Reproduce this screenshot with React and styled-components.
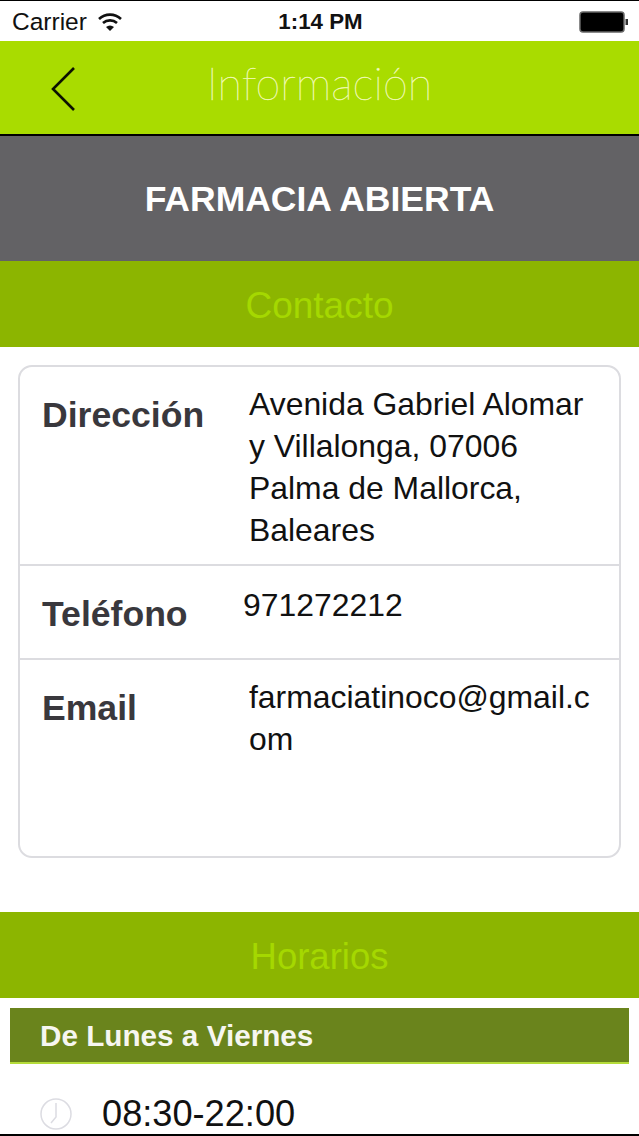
import React from 'react';
import styled, { createGlobalStyle } from 'styled-components';

const GlobalStyle = createGlobalStyle`
  html, body {
    margin: 0;
    padding: 0;
    background: #fff;
    overflow: hidden;
  }
  * { box-sizing: border-box; }
`;

const Page = styled.div`
  width: 639px;
  height: 1136px;
  overflow: hidden;
  font-family: "Liberation Sans", Arial, sans-serif;
  background: #fff;
  border-top: 1px solid #000;
  border-bottom: 2px solid #000;
  display: flex;
  flex-direction: column;
`;

const StatusBar = styled.div`
  height: 40px;
  flex: none;
  display: grid;
  grid-template-columns: 1fr auto 1fr;
  align-items: center;
  padding: 1px 10px 0 12px;
  color: #111;
`;

const StatusLeft = styled.div`
  display: flex;
  align-items: center;
  gap: 11px;
  font-size: 24.5px;
`;

const Clock = styled.div`
  font-size: 22.3px;
  font-weight: 700;
`;

const BatteryWrap = styled.div`
  justify-self: end;
  display: flex;
  align-items: center;
`;

const NavBar = styled.div`
  height: 93px;
  flex: none;
  background: #a9dc00;
  display: flex;
  align-items: center;
  justify-content: center;
  position: relative;
`;

const BackIcon = styled.svg`
  position: absolute;
  left: 50px;
  top: 25px;
`;

const NavTitle = styled.div`
  font-family: Lato, sans-serif;
  font-weight: 100;
  font-size: 45px;
  color: #f4fbc8;
  -webkit-text-stroke: 0.4px #eef9b0;
  margin-top: -9px;
`;

const Banner = styled.div`
  height: 127px;
  flex: none;
  background: #636265;
  border-top: 2px solid #000;
  padding-top: 2px;
  color: #fff;
  font-size: 35.5px;
  font-weight: 700;
  display: flex;
  align-items: center;
  justify-content: center;
`;

const SectionBar = styled.div`
  height: 86px;
  flex: none;
  background: #8cb500;
  padding-top: 4px;
  color: #a5d800;
  font-size: ${(p) => p.$size}px;
  display: flex;
  align-items: center;
  justify-content: center;
`;

const Card = styled.div`
  margin: 18px 18px 54px 18px;
  width: 603px;
  height: 493px;
  flex: none;
  border: 2px solid #dcdce0;
  border-radius: 14px;
  display: flex;
  flex-direction: column;
`;

const Row = styled.div`
  height: ${(p) => p.$height}px;
  flex: none;
  display: grid;
  grid-template-columns: ${(p) => p.$labelWidth}px 1fr;
  padding: ${(p) => p.$top}px 20px 0 22px;
  border-bottom: ${(p) => (p.$last ? 'none' : '2px solid #dcdce0')};
`;

const Label = styled.div`
  color: #39383d;
  font-size: 35.6px;
  font-weight: 700;
  line-height: 42px;
  padding-top: ${(p) => p.$offset}px;
`;

const Value = styled.div`
  color: #111;
  font-size: 31.9px;
  line-height: 42px;
  word-break: break-all;
`;

const AddressLine = styled.div`
  white-space: nowrap;
`;

const DayBar = styled.div`
  margin: 10px 10px 0;
  height: 56px;
  flex: none;
  background: #6a841c;
  border-bottom: 2px solid #b5dc3a;
  color: #f6f6f0;
  font-size: 29.7px;
  font-weight: 700;
  display: flex;
  align-items: center;
  padding: 2px 0 0 30px;
`;

const TimeRow = styled.div`
  display: flex;
  align-items: center;
  gap: 30px;
  padding: 29px 0 0 40px;
  color: #111;
  font-size: 36.2px;
`;

const Wifi = () => (
  <svg width="24" height="20" viewBox="0 0 24 20">
    <path d="M1 7 A16 16 0 0 1 23 7" fill="none" stroke="#111" strokeWidth="2.6" />
    <path d="M5 11 A10.5 10.5 0 0 1 19 11" fill="none" stroke="#111" strokeWidth="2.6" />
    <path d="M8 15 L12 19 L16 15 A6 6 0 0 0 8 15 Z" fill="#111" />
  </svg>
);

const Battery = () => (
  <svg width="50" height="22" viewBox="0 0 50 22">
    <rect x="1" y="1" width="44" height="20" rx="3" fill="#000" stroke="#666" strokeWidth="1.5" />
    <rect x="46.5" y="8" width="2.5" height="6" fill="#333" />
  </svg>
);

const ClockIcon = () => (
  <svg width="32" height="32" viewBox="0 0 32 32">
    <circle cx="16" cy="16" r="15" fill="none" stroke="#dcdce2" strokeWidth="1.5" />
    <path d="M16 5 L16 19 L11 25" fill="none" stroke="#dcdce2" strokeWidth="1.5" />
  </svg>
);

export default function App() {
  return (
    <Page>
      <GlobalStyle />
      <StatusBar>
        <StatusLeft>
          Carrier
          <Wifi />
        </StatusLeft>
        <Clock>1:14 PM</Clock>
        <BatteryWrap>
          <Battery />
        </BatteryWrap>
      </StatusBar>

      <NavBar>
        <BackIcon width="26" height="46" viewBox="0 0 26 46">
          <path d="M24 2 L3 23 L24 44" fill="none" stroke="#0c1200" strokeWidth="2.6" />
        </BackIcon>
        <NavTitle>Información</NavTitle>
      </NavBar>

      <Banner>FARMACIA ABIERTA</Banner>
      <SectionBar $size={37}>Contacto</SectionBar>

      <Card>
        <Row $height={199} $top={16} $labelWidth={207}>
          <Label $offset={11}>Dirección</Label>
          <Value>
            <AddressLine>Avenida Gabriel Alomar</AddressLine>
            <AddressLine>y Villalonga, 07006</AddressLine>
            <AddressLine>Palma de Mallorca,</AddressLine>
            <AddressLine>Baleares</AddressLine>
          </Value>
        </Row>
        <Row $height={94} $top={18} $labelWidth={201}>
          <Label $offset={9}>Teléfono</Label>
          <Value>971272212</Value>
        </Row>
        <Row $height={196} $top={16} $labelWidth={207} $last>
          <Label $offset={11}>Email</Label>
          <Value>farmaciatinoco@gmail.com</Value>
        </Row>
      </Card>

      <SectionBar $size={36.5}>Horarios</SectionBar>
      <DayBar>De Lunes a Viernes</DayBar>
      <TimeRow>
        <ClockIcon />
        08:30-22:00
      </TimeRow>
    </Page>
  );
}
